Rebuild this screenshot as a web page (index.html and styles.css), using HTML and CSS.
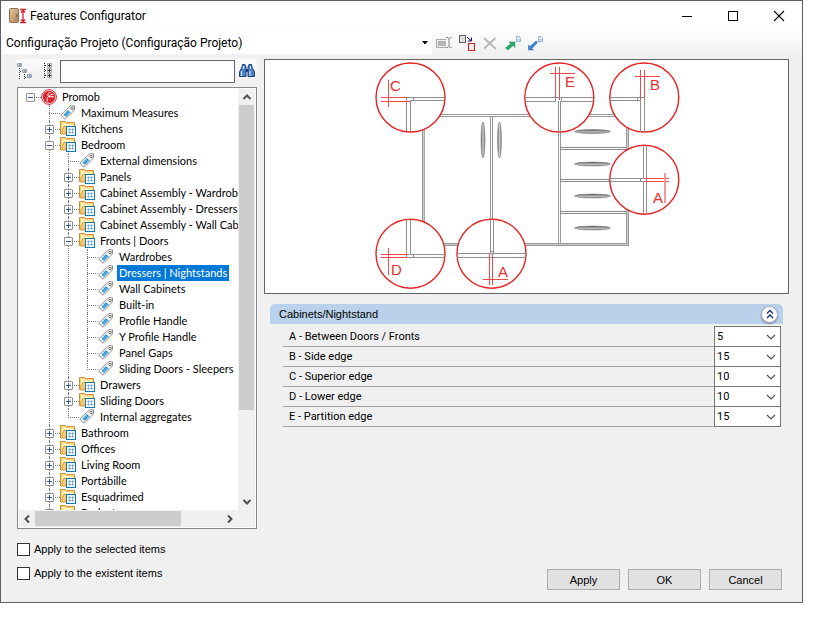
FILE: index.html
```html
<!DOCTYPE html>
<html lang="en">
<head>
<meta charset="utf-8">
<title>Features Configurator</title>
<link rel="stylesheet" href="styles.css">
</head>
<body>
<svg class="defs" aria-hidden="true">
  <defs>
    <linearGradient id="gold" x1="0" y1="0" x2="1" y2="1"><stop offset="0" stop-color="#ffeaa0"/><stop offset="1" stop-color="#f0b040"/></linearGradient>
    <linearGradient id="door" x1="0" y1="0" x2="1" y2="1"><stop offset="0" stop-color="#e6c79c"/><stop offset="1" stop-color="#a98258"/></linearGradient>
    <linearGradient id="steelV" x1="0" y1="0" x2="1" y2="0"><stop offset="0" stop-color="#666"/><stop offset=".5" stop-color="#ccc"/><stop offset="1" stop-color="#777"/></linearGradient>
    <linearGradient id="steelH" x1="0" y1="0" x2="0" y2="1"><stop offset="0" stop-color="#555"/><stop offset=".6" stop-color="#bbb"/><stop offset="1" stop-color="#888"/></linearGradient>
  </defs>
  <symbol id="folder" viewBox="0 0 16 16">
    <path d="M.5 12.500V.5H5.500L6.500 1.500H14.500V12.500Z" fill="#f9d477" stroke="#cf8f3c"/>
    <path d="M2 2H5L6 3H13V5H4L2 10Z" fill="#fff0b8"/>
    <path d="M1 12L4 5.500H8V13H1Z" fill="url(#gold)" stroke="#d99a3e"/>
    <rect x="6.500" y="5.500" width="9" height="9" fill="#fff" stroke="#0b78b8"/>
    <path d="M8 8.500H14M8 11.500H14M9.500 7V13M12.500 7V13" stroke="#8fb9d8" fill="none"/>
  </symbol>
  <symbol id="tag" viewBox="0 0 16 16">
    <path d="M.8 10L8.500 2.500L10.500 .800H14.500V4.500L13.500 6L6 13.500L4.500 14Z" fill="#fafafa" stroke="#8d8d8d"/>
    <path d="M10.500 1.500H14V4.500L12.500 6L9 3Z" fill="#d8d8d8"/>
    <circle cx="12" cy="3.500" r="1.200" fill="#fff" stroke="#777"/>
    <path d="M3.500 9.500L8 5L10.500 7.500L6 12Z" fill="#2f97d0"/>
    <path d="M5 8L7.500 10.500M6.500 6.500L9 9" stroke="#a5dcf5" stroke-width=".6"/>
  </symbol>
  <symbol id="promob" viewBox="0 0 16 16">
    <circle cx="8" cy="8" r="7.400" fill="#fff" stroke="#d6242c"/>
    <circle cx="8" cy="8" r="6.200" fill="#d9232d"/>
    <path d="M9.500 3.500C6.500 3.500 6 6.500 8 7.500C5.500 8 5.500 11 7 13.500M8 7.500C9 5.500 11 5 12.500 5.500M8 7.800H13" stroke="#fff" fill="none"/>
  </symbol>
  <symbol id="chevron" viewBox="0 0 10 10"><path d="M1 3L5 7L9 3" fill="none" stroke="#555" stroke-width="1.200"/></symbol>
  <symbol id="arrow" viewBox="0 0 10 10"><path d="M1.500 3L5 6.500L8.500 3" fill="none" stroke="#505050" stroke-width="2"/></symbol>
  <symbol id="page" viewBox="0 0 6 7"><path d="M.5 .5H3.500L5.500 2.500V6.500H.5Z" fill="#e4effc" stroke="#78a4d6"/><path d="M1.500 4.500H4.500" stroke="#78a4d6"/></symbol>
</svg>

<main class="window">
  <header class="titlebar">
    <svg class="app-icon" width="18" height="16" viewBox="0 0 18 16" aria-hidden="true">
      <rect x=".5" y=".5" width="9" height="14" rx="1" fill="url(#door)" stroke="#8f7252"/>
      <path d="M8 6V9" stroke="#6b5238"/>
      <path d="M11 1.500H17M11 14.500H17M14 2V14M12 4.500L14 2.500L16 4.500M12 11.500L14 13.500L16 11.500" fill="none" stroke="#d8222e" stroke-width="1.300"/>
    </svg>
    <h1>Features Configurator</h1>
    <div class="caption-buttons">
      <button aria-label="Minimize"><svg width="12" height="12"><path d="M1 6.500H11" stroke="#000"/></svg></button>
      <button aria-label="Maximize"><svg width="12" height="12"><rect x="1.500" y="1.500" width="9" height="9" fill="none" stroke="#000"/></svg></button>
      <button aria-label="Close"><svg width="12" height="12"><path d="M1 1L11 11M11 1L1 11" stroke="#000" stroke-width="1.100"/></svg></button>
    </div>
  </header>

  <div class="toolbar">
    <div class="project">
      <select aria-label="Project"><option>Configuração Projeto (Configuração Projeto)</option></select>
      <svg width="7" height="4" viewBox="0 0 7 4" aria-hidden="true"><path d="M0 0H6L3 3.500Z" fill="#000"/></svg>
    </div>
    <button aria-label="Rename"><svg width="16" height="16" viewBox="0 0 16 16"><path d="M10 4.500H.5V12.500H11" fill="#eee" stroke="#aaa"/><rect x="2" y="6" width="8" height="5" fill="#b4b4b4"/><path d="M10 2.500H12L13 3.500L14 2.500H15.500M13 3V12M10.500 12.500H12L13 11.500L14 12.500H15.500" fill="none" stroke="#888"/></svg></button>
    <button aria-label="Replace"><svg width="16" height="16" viewBox="0 0 16 16"><rect x=".5" y=".5" width="6" height="7" fill="#ddd" stroke="#666"/><rect x="9.500" y="8.500" width="6" height="7" fill="#eee" stroke="#e01818"/><path d="M8 2L12 5.500M12.500 2.500V6H9" fill="none" stroke="#101070"/></svg></button>
    <button aria-label="Delete"><svg width="16" height="16" viewBox="0 0 16 16"><path d="M2 3L14 14M13.500 3L2 13.500" stroke="#b8b8b8" stroke-width="2"/></svg></button>
    <button aria-label="Export"><svg width="16" height="16" viewBox="0 0 16 16"><path d="M.5 13L6 8.500L4 7H10V12.500L8 10.500L3 15Z" fill="#2fa56f" stroke="#208858" stroke-width=".5"/><use href="#page" x="11" y="1" width="5" height="6"/></svg></button>
    <button aria-label="Import"><svg width="16" height="16" viewBox="0 0 16 16"><path d="M.5 10L2 11.500L8 6L9.500 7.500L4 13.500L5.500 15H.5Z" fill="#3c7fd0" stroke="#2868b8" stroke-width=".5"/><use href="#page" x="10" y="1" width="5" height="6"/></svg></button>
  </div>

  <div class="content">
    <section class="side">
      <div class="search">
        <button aria-label="Expand all"><svg width="16" height="16" viewBox="0 0 16 16"><path d="M2.500 5V16M7.500 11V16M3 8.500H6M8 14.500H11" stroke="#444" stroke-dasharray="1 1"/><path d="M.5 .5H4.500V3.500H.5ZM5.500 6.500H9.500V9.500H5.500ZM10.500 11.500H14.500V14.500H10.500Z" fill="#eef2f8" stroke="#9aa5b2"/><path d="M1.500 2H4M6.500 8H9M11.500 13H14" stroke="#40566e"/></svg></button>
        <button aria-label="Collapse all"><svg width="16" height="16" viewBox="0 0 16 16"><path d="M4.500 0V16M5 2.500H7M5 7.500H7M5 12.500H7" stroke="#333" stroke-dasharray="1 1"/><path d="M7.500 .5H11.500V4.500H7.500ZM7.500 5.500H11.500V9.500H7.500ZM7.500 10.500H11.500V14.500H7.500Z" fill="#fff" stroke="#aaa"/><path d="M8 2.500H11M9.500 1V4M8 7.500H11M9.500 6V9M8 12.500H11M9.500 11V14" stroke="#333"/></svg></button>
        <input type="text" aria-label="Search">
        <button aria-label="Find"><svg width="16" height="16" viewBox="0 0 16 16"><path d="M3 4L3.500 1.500H6L7 4V13.500H.5V9ZM13 4L12.500 1.500H10L9 4V13.500H15.500V9Z" fill="#4d7fc4" stroke="#1c407c"/><path d="M7 6H9V9H7Z" fill="#1c407c"/><path d="M2.500 8V13M11 8V13M4.500 3V6M11.500 3V6" stroke="#c6dcf5" stroke-width="1.300"/></svg></button>
      </div>

      <div class="tree">
        <div class="tree-view">
          <ul class="root">
            <li><div class="row"><button class="toggle open" aria-label="Collapse"></button><svg class="icon"><use href="#promob"/></svg><span>Promob</span></div>
              <ul>
                <li><div class="row"><svg class="icon"><use href="#tag"/></svg><span>Maximum Measures</span></div></li>
                <li><div class="row"><button class="toggle" aria-label="Expand"></button><svg class="icon"><use href="#folder"/></svg><span>Kitchens</span></div></li>
                <li><div class="row"><button class="toggle open" aria-label="Collapse"></button><svg class="icon"><use href="#folder"/></svg><span>Bedroom</span></div>
                  <ul>
                    <li><div class="row"><svg class="icon"><use href="#tag"/></svg><span>External dimensions</span></div></li>
                    <li><div class="row"><button class="toggle" aria-label="Expand"></button><svg class="icon"><use href="#folder"/></svg><span>Panels</span></div></li>
                    <li><div class="row"><button class="toggle" aria-label="Expand"></button><svg class="icon"><use href="#folder"/></svg><span>Cabinet Assembly - Wardrobe</span></div></li>
                    <li><div class="row"><button class="toggle" aria-label="Expand"></button><svg class="icon"><use href="#folder"/></svg><span>Cabinet Assembly - Dressers |</span></div></li>
                    <li><div class="row"><button class="toggle" aria-label="Expand"></button><svg class="icon"><use href="#folder"/></svg><span>Cabinet Assembly - Wall Cabin</span></div></li>
                    <li><div class="row"><button class="toggle open" aria-label="Collapse"></button><svg class="icon"><use href="#folder"/></svg><span>Fronts | Doors</span></div>
                      <ul>
                        <li><div class="row"><svg class="icon"><use href="#tag"/></svg><span>Wardrobes</span></div></li>
                        <li><div class="row"><svg class="icon"><use href="#tag"/></svg><span class="selected">Dressers | Nightstands</span></div></li>
                        <li><div class="row"><svg class="icon"><use href="#tag"/></svg><span>Wall Cabinets</span></div></li>
                        <li><div class="row"><svg class="icon"><use href="#tag"/></svg><span>Built-in</span></div></li>
                        <li><div class="row"><svg class="icon"><use href="#tag"/></svg><span>Profile Handle</span></div></li>
                        <li><div class="row"><svg class="icon"><use href="#tag"/></svg><span>Y Profile Handle</span></div></li>
                        <li><div class="row"><svg class="icon"><use href="#tag"/></svg><span>Panel Gaps</span></div></li>
                        <li><div class="row"><svg class="icon"><use href="#tag"/></svg><span>Sliding Doors - Sleepers</span></div></li>
                      </ul>
                    </li>
                    <li><div class="row"><button class="toggle" aria-label="Expand"></button><svg class="icon"><use href="#folder"/></svg><span>Drawers</span></div></li>
                    <li><div class="row"><button class="toggle" aria-label="Expand"></button><svg class="icon"><use href="#folder"/></svg><span>Sliding Doors</span></div></li>
                    <li><div class="row"><svg class="icon"><use href="#tag"/></svg><span>Internal aggregates</span></div></li>
                  </ul>
                </li>
                <li><div class="row"><button class="toggle" aria-label="Expand"></button><svg class="icon"><use href="#folder"/></svg><span>Bathroom</span></div></li>
                <li><div class="row"><button class="toggle" aria-label="Expand"></button><svg class="icon"><use href="#folder"/></svg><span>Offices</span></div></li>
                <li><div class="row"><button class="toggle" aria-label="Expand"></button><svg class="icon"><use href="#folder"/></svg><span>Living Room</span></div></li>
                <li><div class="row"><button class="toggle" aria-label="Expand"></button><svg class="icon"><use href="#folder"/></svg><span>Portábille</span></div></li>
                <li><div class="row"><button class="toggle" aria-label="Expand"></button><svg class="icon"><use href="#folder"/></svg><span>Esquadrimed</span></div></li>
                <li><div class="row"><button class="toggle" aria-label="Expand"></button><svg class="icon"><use href="#folder"/></svg><span>Budget</span></div></li>
                <li></li>
              </ul>
            </li>
          </ul>
        </div>
        <div class="bar vertical"><svg class="arrow up"><use href="#arrow"/></svg><div class="thumb"></div><div class="rest"></div><svg class="arrow"><use href="#arrow"/></svg></div>
        <div class="bar horizontal"><svg class="arrow left"><use href="#arrow"/></svg><div class="thumb"></div><div class="rest"></div><svg class="arrow right"><use href="#arrow"/></svg></div>
        <div class="corner"></div>
      </div>

      <label class="check"><input type="checkbox">Apply to the selected items</label>
      <label class="check"><input type="checkbox">Apply to the existent items</label>
    </section>

    <section class="details">
      <div class="preview">
        <svg viewBox="265 60 523 233" role="img" aria-label="Cabinet front gaps">
          <g fill="none" stroke="#999">
            <path d="M430 114.500H628M430 116.500H628M490.500 116V244M492.500 116V244M422.500 116V245M558.500 116V245M560.500 116V243M422 243.500H628M422 245.500H629M626.500 116V245M628.500 116V245"/>
            <path d="M424.500 116V243" stroke="#aaa"/>
            <path d="M560 147.500H626M560 179.500H626M560 211.500H626M560 149.500H626M560 181.500H626M560 213.500H626" stroke="#888"/>
            <path d="M423.500 116V245M627.500 116V245M423 244.500H628" stroke="#ccc"/>
          </g>
          <g fill="url(#steelV)" stroke="#777" stroke-width=".5"><ellipse cx="483" cy="140" rx="2" ry="18"/><ellipse cx="499.500" cy="140" rx="2" ry="18"/></g>
          <g fill="url(#steelH)" stroke="#777" stroke-width=".5"><ellipse cx="592.500" cy="131.500" rx="18" ry="2"/><ellipse cx="592.500" cy="164" rx="18" ry="2"/><ellipse cx="592.500" cy="196" rx="18" ry="2"/><ellipse cx="592.500" cy="228" rx="18" ry="2"/></g>
          <g fill="#fff" stroke="#e62222" stroke-width="1.400">
            <circle cx="410.500" cy="97.500" r="34.500"/><circle cx="559.300" cy="97.500" r="34.500"/><circle cx="644.300" cy="97.500" r="34.500"/>
            <circle cx="644.300" cy="179.700" r="34.500"/><circle cx="410.500" cy="253.700" r="34.500"/><circle cx="491.500" cy="253.700" r="34.500"/>
          </g>
          <g fill="none" stroke="#909090">
            <path d="M406.500 131V97.500H444.500M410.500 131V100.500H444.500M413.500 97V101"/>
            <path d="M525 97.500H593M525 101.500H555.500V97M593 101.500H561.500V97M558.500 101V132M560.500 101V132"/>
            <path d="M610 97.500H644.500V132M610 100.500H640.500V132M637.500 97V101"/>
            <path d="M610 178.500H643.500V145.500M610 181.500H643.500V214M646.500 145.500V214M640.500 178V182"/>
            <path d="M406.500 219.500V257.500H444.500M410.500 219.500V254.500H444.500M413.500 254V258"/>
            <path d="M490.500 219.500V253.500M493.500 219.500V253.500M457 253.500H526M457 257.500H526M490 251.500H494"/>
          </g>
          <g fill="none" stroke="#f04a4a">
            <path d="M381 97.500H407M381 101.500H411M388.500 80V107"/>
            <path d="M555.500 67V98M559.500 67V100M550 73.500H575"/>
            <path d="M640.500 70V100M644.500 70V98M635 76.500H660"/>
            <path d="M644 178.500H669M644 181.500H669"/><path d="M665 173V203" stroke="#f59a9a" stroke-width="2"/>
            <path d="M381 254.500H409M381 257.500H407M388.500 248V275"/>
            <path d="M489.500 254V285M492.500 254V285M483 279.500H508"/>
          </g>
          <g class="marks"><text x="390" y="91">C</text><text x="565" y="87">E</text><text x="650" y="90">B</text><text x="653" y="203">A</text><text x="391" y="275">D</text><text x="498" y="277">A</text></g>
        </svg>
      </div>

      <div class="group">
        <h2>Cabinets/Nightstand
          <button aria-label="Collapse group"><svg width="10" height="10" viewBox="0 0 10 10"><path d="M2 4.500L5 1.500L8 4.500M2 9L5 6L8 9" fill="none" stroke="#223a7a" stroke-width="1.500"/></svg></button>
        </h2>
        <div class="fields">
          <div class="field"><label for="gap-a">A - Between Doors / Fronts</label><div class="combo"><select id="gap-a"><option>5</option></select><svg><use href="#chevron"/></svg></div></div>
          <div class="field"><label for="gap-b">B - Side edge</label><div class="combo"><select id="gap-b"><option>15</option></select><svg><use href="#chevron"/></svg></div></div>
          <div class="field"><label for="gap-c">C - Superior edge</label><div class="combo"><select id="gap-c"><option>10</option></select><svg><use href="#chevron"/></svg></div></div>
          <div class="field"><label for="gap-d">D - Lower edge</label><div class="combo"><select id="gap-d"><option>10</option></select><svg><use href="#chevron"/></svg></div></div>
          <div class="field"><label for="gap-e">E - Partition edge</label><div class="combo"><select id="gap-e"><option>15</option></select><svg><use href="#chevron"/></svg></div></div>
        </div>
      </div>

      <div class="actions"><button>Apply</button><button>OK</button><button>Cancel</button></div>
    </section>
  </div>
</main>
</body>
</html>
```
FILE: styles.css
```css
* { box-sizing: border-box; }

body {
  margin: 0;
  padding: 0 17px 16px 0;
  min-height: 100vh;
  display: flex;
  background: #fff;
  color: #000;
  font: 11px/16px "Liberation Sans", Arial, sans-serif;
}

button, input, select { font: inherit; color: inherit; margin: 0; padding: 0; }
button { border: 0; background: none; display: grid; place-items: center; }
select { appearance: none; border: 0; background: none; border-radius: 0; }
ul { list-style: none; margin: 0; padding: 0; }
h1, h2 { margin: 0; font-weight: normal; }
.defs { position: absolute; width: 0; height: 0; }

.window {
  flex: 1;
  min-width: 0;
  display: flex;
  flex-direction: column;
  border: 1px solid #5c5f68;
  background: #f0f0f0;
}

.titlebar {
  display: flex;
  align-items: center;
  gap: 3px;
  height: 30px;
  padding-left: 8px;
  background: #fff;
}
.titlebar h1 { font: 12px/16px Roboto, sans-serif; }
.caption-buttons { display: flex; margin-left: auto; }
.caption-buttons button { width: 46px; height: 28px; }

.toolbar {
  display: flex;
  align-items: center;
  gap: 7px;
  height: 24px;
  padding-left: 1px;
  background: linear-gradient(#fcfcfc, #f0f0f0);
}
.project {
  display: grid;
  grid-template-columns: 1fr 10px;
  align-items: center;
  flex: 0 0 430px;
  margin-right: -3px;
  height: 22px;
  background: #fff;
}
.project select { font: 12px/22px Roboto, sans-serif; grid-area: 1 / 1 / 2 / 3; height: 22px; padding-left: 4px; }
.project svg { grid-area: 1 / 2; pointer-events: none; }

.content {
  flex: 1;
  display: grid;
  grid-template-columns: 240px minmax(0, 1fr);
  gap: 7px;
  padding: 4px 13px 12px 16px;
}

.side { display: flex; flex-direction: column; padding-bottom: 1px; }
.search {
  display: flex;
  align-items: center;
  gap: 4px;
  height: 24px;
  padding-right: 2px;
  margin-bottom: 4px;
  background: linear-gradient(#fafafa, #f0f0f0);
}
.search button + button { margin-left: 3px; }
.search input {
  flex: 1;
  min-width: 0;
  height: 23px;
  border: 1px solid #646464;
  background: #fff;
}

.tree {
  flex: 1;
  display: grid;
  grid-template: minmax(0, 1fr) 17px / minmax(0, 1fr) 17px;
  padding: 1px;
  margin-bottom: 12px;
  border: 1px solid #828790;
  background: #fff;
}
.tree-view { position: relative; overflow: hidden; }
.root { position: absolute; padding-left: 7px; font-family: Lato, sans-serif; }
.root ul { padding-left: 19px; }
.root li { position: relative; }
.root li li::before {
  content: "";
  position: absolute;
  left: 4px;
  top: 0;
  bottom: 0;
  border-left: 1px dotted #808080;
}
.root li li:last-child::before { height: 9px; bottom: auto; }
.row {
  position: relative;
  display: grid;
  grid-template-columns: 15px 16px auto;
  align-items: center;
  justify-content: start;
  height: 16px;
  white-space: nowrap;
}
.row::before {
  content: "";
  position: absolute;
  left: 4px;
  top: 8px;
  width: 11px;
  border-top: 1px dotted #808080;
}
.row span { grid-column: 3; margin-left: 3px; padding: 0 2px; height: 16px; }
.icon { grid-column: 2; width: 16px; height: 16px; }
.row .selected { background: #0078d7; color: #fff; }
.toggle {
  position: relative;
  width: 9px;
  height: 9px;
  border: 1px solid #919191;
  border-radius: 1px;
  background:
    linear-gradient(#3c5a9a, #3c5a9a) center / 5px 1px no-repeat,
    linear-gradient(#3c5a9a, #3c5a9a) center / 1px 5px no-repeat,
    #f8f8f8;
}
.toggle.open { background: linear-gradient(#3c5a9a, #3c5a9a) center / 5px 1px no-repeat, #f8f8f8; }

.bar { display: flex; align-items: center; background: #f0f0f0; }
.vertical { flex-direction: column; }
.thumb { background: #cdcdcd; }
.vertical .thumb { width: 15px; flex: 305; }
.vertical .rest { flex: 84; }
.horizontal .thumb { height: 15px; flex: 145; }
.horizontal .rest { flex: 41; }
.arrow { width: 10px; height: 10px; margin: 3px; }
.up { transform: rotate(180deg); }
.left { transform: rotate(90deg); }
.right { transform: rotate(-90deg); }
.corner { background: #f0f0f0; }

.check { display: flex; align-items: center; gap: 4px; height: 16px; margin-bottom: 8px; }
.check input { appearance: none; width: 13px; height: 13px; border: 1px solid #333; background: #fff; }

.details { display: flex; flex-direction: column; }
.preview { border: 1px solid #646464; background: #fff; }
.preview svg { display: block; width: 100%; }
.marks { fill: #e83030; font-size: 15px; }

.group { margin: 10px 6px 0; }
.group h2 {
  display: flex;
  align-items: center;
  justify-content: space-between;
  height: 20px;
  padding: 0 5px 0 9px;
  border-radius: 5px 5px 0 0;
  background: #b9d1ea;
  font-size: 11px;
}
.group h2 button {
  width: 17px;
  height: 17px;
  border: 1px solid #a0a8b8;
  border-radius: 50%;
  background: #fff;
  box-shadow: 0 1px 2px #7888a0;
}
.fields { margin: 3px 2px 0 13px; font-family: Roboto, sans-serif; }
.field { display: grid; grid-template-columns: minmax(0, 1fr) 67px; height: 20px; }
.field label { display: flex; align-items: center; padding-left: 6px; padding-top: 1px; border-bottom: 1px solid #a0a0a0; }
.combo { display: grid; grid-template-columns: 1fr 14px; align-items: center; margin-top: -1px; height: 21px; border: 1px solid #767676; background: #fff; }
.combo select { grid-area: 1 / 1 / 2 / 3; height: 19px; padding-left: 2px; }
.combo svg { grid-area: 1 / 2; width: 10px; height: 10px; pointer-events: none; }

.actions { display: flex; justify-content: flex-end; gap: 8px; margin: auto 7px 0 0; }
.actions button { width: 73px; height: 21px; border: 1px solid #adadad; background: #e1e1e1; }
```
